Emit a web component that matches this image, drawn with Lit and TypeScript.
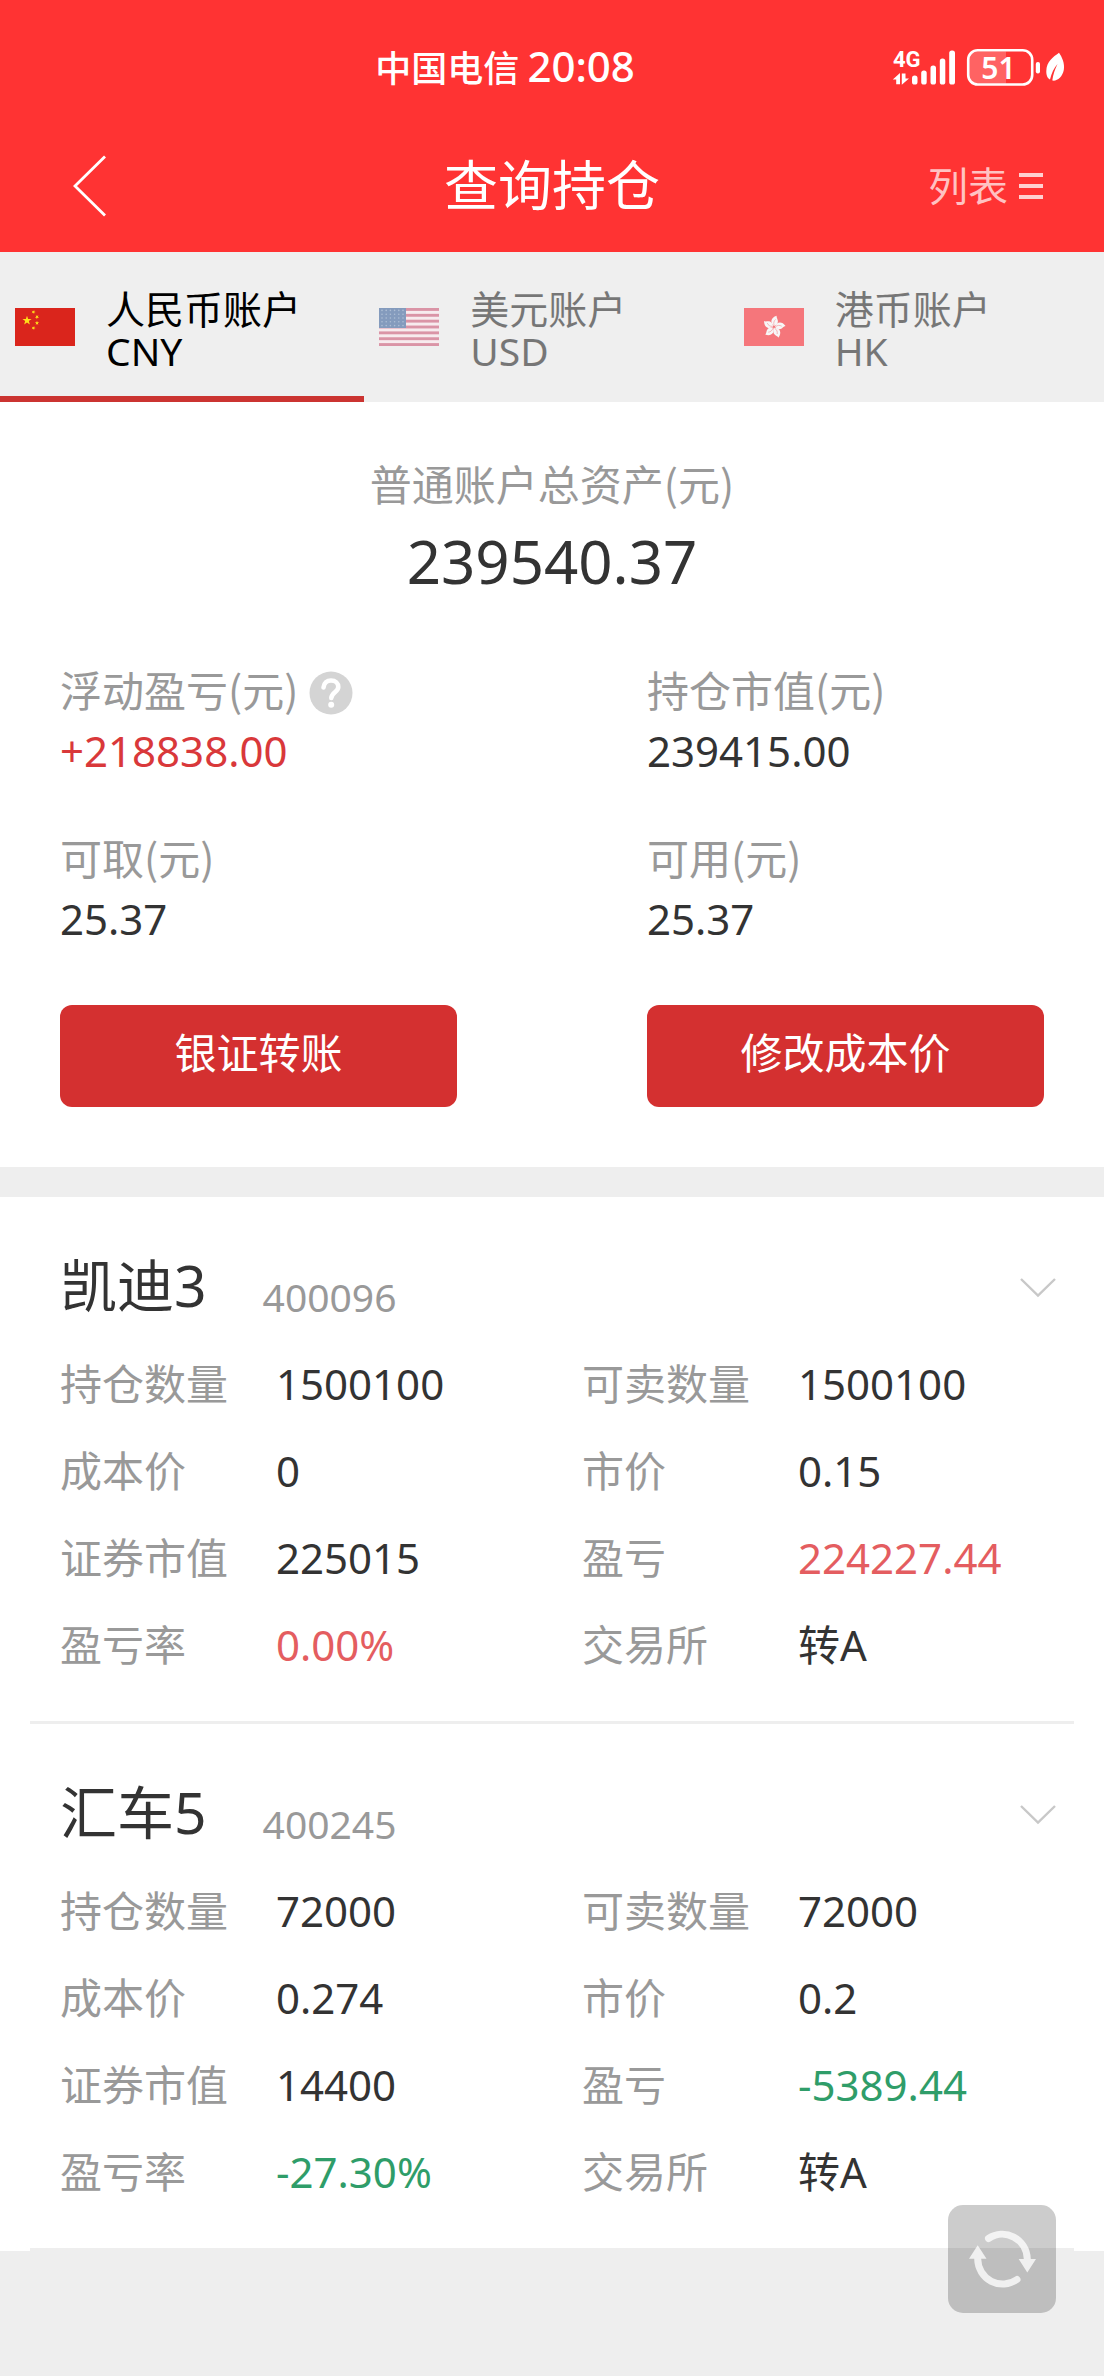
import { LitElement, html, css, svg } from "lit";
import { customElement, property, state } from "lit/decorators.js";
import { classMap } from "lit/directives/class-map.js";

type Tone = "plain" | "gain" | "loss";
interface Field { label: string; value: string; tone?: Tone }
interface Holding { name: string; code: string; fields: Field[] }

const starPoints = (cx: number, cy: number, r: number, turn = 0) =>
  Array.from({ length: 10 }, (_, i) => {
    const a = ((i * 36 - 90 + turn) * Math.PI) / 180;
    const d = i % 2 ? r * 0.4 : r;
    return `${(cx + d * Math.cos(a)).toFixed(2)},${(cy + d * Math.sin(a)).toFixed(2)}`;
  }).join(" ");

const flagCN = html`<svg class="flag" viewBox="0 0 60 38" aria-hidden="true">
  <rect width="60" height="38" fill="#da251c" />
  <g fill="#ffe01a">
    <polygon points=${starPoints(12, 12.5, 4.8)} />
    <polygon points=${starPoints(18.5, 4, 2.2, 20)} />
    <polygon points=${starPoints(22, 9, 2.2, 40)} />
    <polygon points=${starPoints(22, 15, 2.2)} />
    <polygon points=${starPoints(18.5, 20, 2.2, 20)} />
  </g>
</svg>`;

const flagUS = html`<svg class="flag" viewBox="0 0 60 38" aria-hidden="true">
  <rect width="60" height="38" fill="#ffe9ee" />
  ${[0, 1, 2, 3, 4, 5, 6].map((i) => svg`<rect y=${i * 5.85} width="60" height="2.9" fill="#c73c60" />`)}
  <rect width="27" height="20" fill="#1b4a8c" />
  ${[0, 1, 2, 3, 4].map((r) =>
    [0, 1, 2, 3, 4, 5].map((c) => svg`<circle cx=${3 + c * 4.2} cy=${2.4 + r * 3.8} r="0.8" fill="#6f8fbc" />`)
  )}
</svg>`;

const flagHK = html`<svg class="flag" viewBox="0 0 60 38" aria-hidden="true">
  <rect width="60" height="38" fill="#fb0009" />
  ${[0, 72, 144, 216, 288].map(
    (a) => svg`<g transform="rotate(${a + 6} 30 19)">
      <path d="M30 18C25.500 15.500 25.500 10 31.500 7.500C31 9.500 34.500 12 33 15C32.300 16.500 31 17.500 30 18Z" fill="#fff" />
      <path d="M30 17.500C28.800 15 29.300 13 30.800 11.300" fill="none" stroke="#fb6a70" stroke-width=".8" />
    </g>`
  )}
</svg>`;

@customElement("status-bar")
class StatusBar extends LitElement {
  static styles = css`
    :host { display: flex; justify-content: space-between; align-items: center; height: 120px; padding: 16px 36px 0 34%; box-sizing: border-box; color: #fff; }
    .carrier { display: flex; align-items: center; gap: 8px; padding-bottom: 4px; font-size: 36px; line-height: 48px; font-weight: 500; font-family: "Noto Sans CJK SC", sans-serif; }
    .time { font-size: 42px; font-family: "Noto Sans", sans-serif; }
    .icons { width: 176px; height: 40px; display: block; }
    .small { font: 700 22px Roboto, sans-serif; }
    .level { font: 600 30px "Noto Sans", sans-serif; }
  `;
  render() {
    return html`
      <div class="carrier"><span>中国电信</span><span class="time">20:08</span></div>
      <svg class="icons" viewBox="892 48 176 40" fill="#fff" role="img" aria-label="4G 51%">
        <text class="small" x="893" y="67">4G</text>
        <path d="M896.200 84.300V79.500H892.800L900 73V84.300ZM901.800 73.500V84.800L909 78.500H905.500V73.500Z" />
        <rect x="912" y="75.500" width="5.500" height="9" rx="2.600" />
        <rect x="921.200" y="70.500" width="5.500" height="14" rx="2.600" />
        <rect x="930.500" y="65.500" width="5.500" height="19" rx="2.600" />
        <rect x="939.800" y="58.500" width="5.500" height="26" rx="2.600" />
        <rect x="949.200" y="50.500" width="5.800" height="34" rx="2.600" />
        <path d="M977 51.500H1006V83.500H977Q969 83.500 969 75.500V59.500Q969 51.500 977 51.500Z" fill-opacity=".24" />
        <rect x="968.200" y="50.200" width="64" height="34.300" rx="9.500" fill="none" stroke="#fff" stroke-width="2.600" />
        <text class="level" x="998.500" y="79" text-anchor="middle">51</text>
        <rect x="1035.800" y="62" width="4.200" height="11.500" rx="2" />
        <path d="M1059 52.700C1053 57 1046.500 61.500 1046.300 71C1046.200 75 1047.500 78.500 1050 79.500C1051.500 73 1054 68 1057.500 64C1055 69 1053 75 1052.300 80.500C1057 81.500 1062.500 77 1063.800 70C1065 63.500 1062 57 1059 52.700Z" />
      </svg>`;
  }
}

@customElement("summary-figure")
class SummaryFigure extends LitElement {
  @property() label = "";
  @property() value = "";
  @property() tone: Tone = "plain";
  @property({ type: Boolean }) hint = false;
  static styles = css`
    :host { display: block; font-size: 42px; line-height: 60px; }
    .label { display: flex; gap: 11px; height: 60px; line-height: 56px; color: #999; font-family: "Noto Sans CJK SC", sans-serif; }
    .value { color: #333; }
    .gain { color: #d9383a; }
    .help { align-self: flex-end; border: 0; background: none; padding: 0 0 6px; }
    .mark { display: block; width: 44px; height: 44px; }
  `;
  render() {
    return html`
      <div class="label">
        <span>${this.label}</span>
        ${this.hint
          ? html`<button class="help" aria-label="说明">
              <svg class="mark" viewBox="0 0 44 44">
                <circle cx="22" cy="22" r="21.500" fill="#d4d4d4" />
                <path d="M14.500 16.500C15 12 18 9.500 22 9.500C26.500 9.500 29.300 12.300 29.300 16C29.300 21 22.500 21.500 22.300 27" fill="none" stroke="#fff" stroke-width="4.600" stroke-linecap="round" />
                <circle cx="22.200" cy="33.800" r="3" fill="#fff" />
              </svg>
            </button>`
          : ""}
      </div>
      <div class=${classMap({ value: true, gain: this.tone === "gain" })}>${this.value}</div>`;
  }
}

@customElement("holding-card")
class HoldingCard extends LitElement {
  @property({ attribute: false }) holding!: Holding;
  static styles = css`
    :host { display: block; background: #fff; }
    .head { display: flex; align-items: center; padding: 48px 48px 0 60px; height: 84px; }
    .name { margin: 0; font-size: 57px; line-height: 80px; padding-bottom: 4px; font-weight: 400; color: #333; }
    .code { margin-left: 56px; padding-top: 20px; font-size: 39px; line-height: 64px; color: #999; }
    .toggle { margin-left: auto; border: 0; background: none; padding: 2px 0 0; }
    .chevron { display: block; width: 36px; height: 20px; }
    .fields { margin: 0; padding: 11px 0 33px 60px; display: grid; grid-template-columns: 1fr 1fr; font-size: 42px; line-height: 87px; }
    .field { display: grid; grid-template-columns: 216px 1fr; }
    .label { color: #999; line-height: 83px; font-family: "Noto Sans CJK SC", sans-serif; }
    .value { margin: 0; color: #333; }
    .gain { color: #e45d60; }
    .loss { color: #2f9d69; }
    .rule { height: 3px; margin: 0 30px; border: 0; background: #eee; }
  `;
  render() {
    const h = this.holding;
    return html`
      <div class="head">
        <h2 class="name">${h.name}</h2>
        <span class="code">${h.code}</span>
        <button class="toggle" aria-label="展开">
          <svg class="chevron" viewBox="0 0 36 20" fill="none" stroke="#c8c8c8" stroke-width="2.400"><path d="M1 1L18 17.500L35 1" /></svg>
        </button>
      </div>
      <dl class="fields">
        ${h.fields.map(
          (f) => html`<div class="field">
            <dt class="label">${f.label}</dt>
            <dd class=${classMap({ value: true, gain: f.tone === "gain", loss: f.tone === "loss" })}>${f.value}</dd>
          </div>`
        )}
      </dl>
      <hr class="rule" />`;
  }
}

@customElement("app-root")
class AppRoot extends LitElement {
  @state() private active = 0;

  private accounts = [
    { name: "人民币账户", code: "CNY", flag: flagCN },
    { name: "美元账户", code: "USD", flag: flagUS },
    { name: "港币账户", code: "HK", flag: flagHK },
  ];

  private holdings: Holding[] = [
    {
      name: "凯迪3",
      code: "400096",
      fields: [
        { label: "持仓数量", value: "1500100" },
        { label: "可卖数量", value: "1500100" },
        { label: "成本价", value: "0" },
        { label: "市价", value: "0.15" },
        { label: "证券市值", value: "225015" },
        { label: "盈亏", value: "224227.44", tone: "gain" },
        { label: "盈亏率", value: "0.00%", tone: "gain" },
        { label: "交易所", value: "转A" },
      ],
    },
    {
      name: "汇车5",
      code: "400245",
      fields: [
        { label: "持仓数量", value: "72000" },
        { label: "可卖数量", value: "72000" },
        { label: "成本价", value: "0.274" },
        { label: "市价", value: "0.2" },
        { label: "证券市值", value: "14400" },
        { label: "盈亏", value: "-5389.44", tone: "loss" },
        { label: "盈亏率", value: "-27.30%", tone: "loss" },
        { label: "交易所", value: "转A" },
      ],
    },
  ];

  static styles = css`
    :host { display: block; min-height: 100vh; background: #eee; font-family: "Noto Sans", "Noto Sans CJK SC", sans-serif; }
    button { font-family: inherit; cursor: pointer; }
    .top { background: #ff3333; color: #fff; }
    .nav { display: grid; grid-template-columns: 1fr auto 1fr; align-items: center; height: 132px; padding: 0 60px; font-family: "Noto Sans CJK SC", sans-serif; }
    .back { justify-self: start; border: 0; padding: 0 0 0 11px; background: none; }
    .back-icon { display: block; width: 36px; height: 62px; }
    .title { margin: 0; padding-bottom: 6px; font-size: 54px; line-height: 72px; font-weight: 400; }
    .mode { justify-self: end; display: flex; align-items: center; gap: 10px; border: 0; padding: 0; background: none; color: #ffc2c2; font-size: 40px; line-height: 60px; }
    .mode-text { padding-bottom: 4px; }
    .menu { display: block; width: 26px; height: 28px; }
    .tabs { display: flex; height: 150px; background: #efefef; }
    .tab { flex: 0 0 33%; box-sizing: border-box; display: flex; align-items: center; gap: 31px; padding: 6px 0 0 15px; border: 0; border-bottom: 6px solid transparent; background: none; color: #000; text-align: left; font-size: 39px; line-height: 42px; }
    .tab > * { opacity: 0.5; }
    .tab.active { border-bottom-color: #cb3431; }
    .tab.active > * { opacity: 1; }
    .flag { display: block; width: 60px; height: 38px; }
    .account-text { padding-top: 6px; }
    .account, .currency { display: block; }
    .summary { padding: 53px 60px 60px; background: #fff; }
    .total { text-align: center; }
    .total-label { font-size: 42px; line-height: 56px; padding-bottom: 5px; color: #999; font-family: "Noto Sans CJK SC", sans-serif; }
    .total-value { font-size: 60px; line-height: 90px; color: #333; }
    .figures { display: grid; grid-template-columns: 1fr 1fr; gap: 48px 190px; padding: 55px 0 56px; }
    .actions { display: grid; grid-template-columns: 1fr 1fr; gap: 190px; }
    .action { height: 102px; padding: 0 0 10px; border: 0; border-radius: 12px; background: #d43030; color: #fff; font-size: 42px; line-height: 60px; font-family: "Noto Sans CJK SC", sans-serif; }
    .holdings { margin-top: 30px; }
    .refresh { position: fixed; right: 48px; bottom: 63px; width: 108px; height: 108px; padding: 0; border: 0; border-radius: 15px; background: rgba(0, 0, 0, 0.2); }
    .refresh-icon { display: block; width: 108px; height: 108px; }
  `;

  render() {
    return html`
      <header class="top">
        <status-bar></status-bar>
        <nav class="nav">
          <button class="back" aria-label="返回">
            <svg class="back-icon" viewBox="0 0 36 62" fill="none" stroke="#fff" stroke-width="2.800"><path d="M34 1.500L4 31L34 60.500" /></svg>
          </button>
          <h1 class="title">查询持仓</h1>
          <button class="mode">
            <span class="mode-text">列表</span>
            <svg class="menu" viewBox="0 0 26 28" fill="#ffd0d0"><path d="M1 1H25V5H1ZM1 12H25V16H1ZM1 23H25V27H1Z" /></svg>
          </button>
        </nav>
      </header>
      <div class="tabs" role="tablist">
        ${this.accounts.map(
          (a, i) => html`<button
            class=${classMap({ tab: true, active: i === this.active })}
            role="tab"
            aria-selected=${i === this.active}
            @click=${() => (this.active = i)}
          >
            ${a.flag}
            <span class="account-text"><span class="account">${a.name}</span><span class="currency">${a.code}</span></span>
          </button>`
        )}
      </div>
      <section class="summary">
        <div class="total">
          <div class="total-label">普通账户总资产(元)</div>
          <div class="total-value">239540.37</div>
        </div>
        <div class="figures">
          <summary-figure label="浮动盈亏(元)" value="+218838.00" tone="gain" hint></summary-figure>
          <summary-figure label="持仓市值(元)" value="239415.00"></summary-figure>
          <summary-figure label="可取(元)" value="25.37"></summary-figure>
          <summary-figure label="可用(元)" value="25.37"></summary-figure>
        </div>
        <div class="actions">
          <button class="action">银证转账</button>
          <button class="action">修改成本价</button>
        </div>
      </section>
      <main class="holdings">${this.holdings.map((h) => html`<holding-card .holding=${h}></holding-card>`)}</main>
      <button class="refresh" aria-label="刷新">
        <svg class="refresh-icon" viewBox="0 0 108 108">
          <g opacity=".76" fill="none" stroke="#fff" stroke-width="7" stroke-linecap="round">
            <path d="M40.500 33.500A25 25.500 0 0 1 79.300 54" />
            <path d="M29.700 54A25 25.500 0 0 0 69 74.500" />
            <path d="M70.700 54H88L79.300 67.500ZM21 53.700H38.500L29.700 40.300Z" fill="#fff" stroke="none" />
          </g>
        </svg>
      </button>`;
  }
}
